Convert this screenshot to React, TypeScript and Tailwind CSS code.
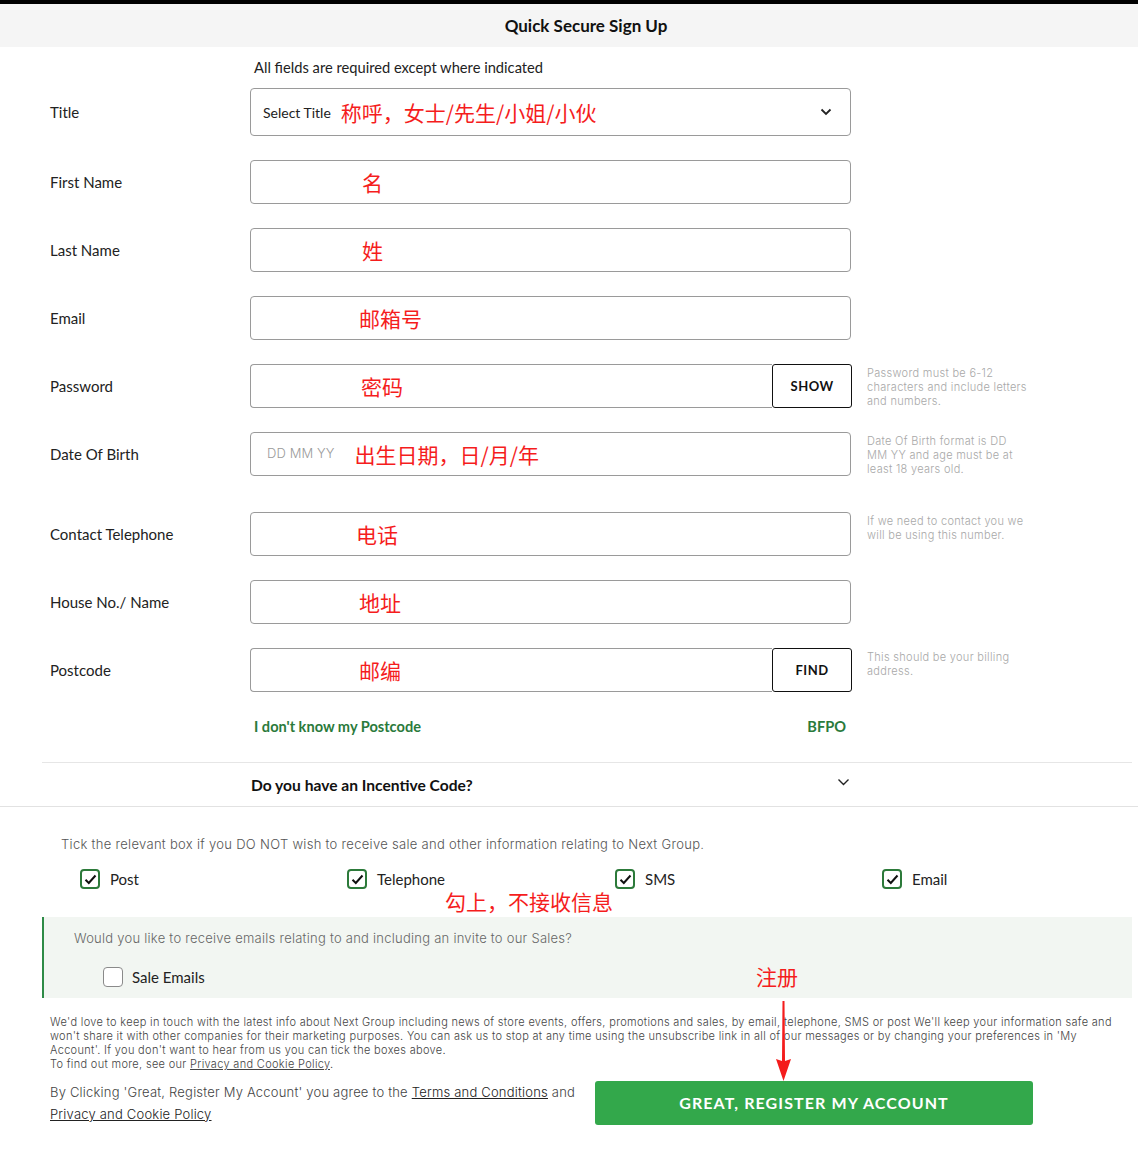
import React from "react";

const LATO = "font-['Lato','Noto_Sans_CJK_SC',sans-serif]";
const RED = "text-[#f51d1d] text-[21px] leading-[24px] font-['Noto_Sans_CJK_SC',sans-serif]";
const HELP = "font-['Inter',sans-serif] font-light text-[11px] leading-[14px] text-[#a8a8a8] tracking-[0.3px]";

function Row({
  label,
  h = 44,
  help,
  children,
  mt,
}: {
  label: string;
  h?: number;
  help?: React.ReactNode;
  children: React.ReactNode;
  mt: string;
}) {
  return (
    <div className={`flex items-start ${mt}`}>
      <div
        className={`w-[250px] pl-[50px] flex items-center text-[15px] text-[#222] ${h === 48 ? "h-[48px]" : "h-[44px]"}`}
      >
        {label}
      </div>
      <div className="w-[602px]">{children}</div>
      {help && <div className={`ml-[15px] w-[161px] pt-[2px] ${HELP}`}>{help}</div>}
    </div>
  );
}

function Input({ red, pl = "pl-[111px]" }: { red: string; pl?: string }) {
  return (
    <div className={`h-[44px] w-[601px] border border-[#9a9a9a] rounded-[4px] flex items-center ${pl}`}>
      <span className={RED}>{red}</span>
    </div>
  );
}

function Check({ checked }: { checked: boolean }) {
  return checked ? (
    <div className="w-[20px] h-[20px] rounded-[4px] border-2 border-[#2c7a3a] flex items-center justify-center bg-white">
      <svg width="13" height="11" viewBox="0 0 13 11">
        <path d="M1.5 5.8 L4.8 9 L11.5 1.5" fill="none" stroke="#111" strokeWidth="2" />
      </svg>
    </div>
  ) : (
    <div className="w-[20px] h-[20px] rounded-[4px] border border-[#8a8a8a] bg-white" />
  );
}

export default function App() {
  return (
    <div className={`relative w-[1138px] min-h-[1158px] bg-white ${LATO} text-[#222]`}>
      <div className="h-[4px] bg-black" />
      <div className="h-[43px] bg-[#f5f5f5] flex items-center justify-center pl-[34px] text-[17px] font-bold text-[#111]">
        Quick Secure Sign Up
      </div>

      <div className="mt-[10px] pl-[254px] text-[14.7px] leading-[20px] text-[#222]">
        All fields are required except where indicated
      </div>

      <Row label="Title" h={48} mt="mt-[11px]">
        <div className="h-[48px] w-[601px] border border-[#9a9a9a] rounded-[4px] flex items-center pl-[12px] pr-[18px]">
          <span className="text-[14px] text-[#222]">Select Title</span>
          <span className={`ml-[10px] ${RED}`}>称呼，女士/先生/小姐/小伙</span>
          <svg className="ml-auto" width="12" height="8" viewBox="0 0 12 8">
            <path d="M1.5 1.5 L6 6 L10.5 1.5" fill="none" stroke="#222" strokeWidth="1.8" />
          </svg>
        </div>
      </Row>

      <Row label="First Name" mt="mt-[24px]">
        <Input red="名" />
      </Row>
      <Row label="Last Name" mt="mt-[24px]">
        <Input red="姓" />
      </Row>
      <Row label="Email" mt="mt-[24px]">
        <Input red="邮箱号" pl="pl-[108px]" />
      </Row>
      <Row
        label="Password"
        mt="mt-[24px]"
        help={<>Password must be 6-12 characters and include letters and numbers.</>}
      >
        <div className="flex h-[44px]">
          <div className="w-[523px] h-[44px] border border-r-0 border-[#9a9a9a] rounded-l-[4px] flex items-center pl-[110px]">
            <span className={RED}>密码</span>
          </div>
          <div className="w-[80px] h-[44px] pt-[2px] border border-[#111] rounded-[3px] flex items-center justify-center text-[13px] font-bold tracking-[0.5px] text-[#111]">
            SHOW
          </div>
        </div>
      </Row>
      <Row
        label="Date Of Birth"
        mt="mt-[24px]"
        help={<>Date Of Birth format is DD MM YY and age must be at least 18 years old.</>}
      >
        <div className="h-[44px] w-[601px] border border-[#9a9a9a] rounded-[4px] flex items-center pl-[16px]">
          <span className="font-['Inter',sans-serif] font-light text-[13px] text-[#9a9a9a] tracking-[0.1px]">DD MM YY</span>
          <span className={`ml-[20px] ${RED}`}>出生日期，日/月/年</span>
        </div>
      </Row>
      <Row
        label="Contact Telephone"
        mt="mt-[36px]"
        help={<>If we need to contact you we will be using this number.</>}
      >
        <Input red="电话" pl="pl-[105px]" />
      </Row>
      <Row label="House No./ Name" mt="mt-[24px]">
        <Input red="地址" pl="pl-[108px]" />
      </Row>
      <Row label="Postcode" mt="mt-[24px]" help={<>This should be your billing address.</>}>
        <div className="flex h-[44px]">
          <div className="w-[522px] h-[44px] border border-r-0 border-[#9a9a9a] rounded-l-[4px] flex items-center pl-[108px]">
            <span className={RED}>邮编</span>
          </div>
          <div className="w-[80px] h-[44px] pt-[2px] border border-[#111] rounded-[3px] flex items-center justify-center text-[13px] font-bold tracking-[0.5px] text-[#111]">
            FIND
          </div>
        </div>
      </Row>

      <div className="mt-[25px] flex w-[846px] pl-[254px] justify-between text-[14.6px] leading-[20px] font-bold text-[#2a7a3b]">
        <span>I don't know my Postcode</span>
        <span>BFPO</span>
      </div>

      <div className="mt-[25px] ml-[42px] mr-[6px] border-t border-[#e6e6e6]">
        <div className="h-[43px] flex items-center pl-[209px] w-[808px] justify-between">
          <span className="text-[15.6px] font-bold text-[#111] pt-[2px]">Do you have an Incentive Code?</span>
          <svg width="13" height="8" viewBox="0 0 13 8" className="mb-[5px]">
            <path d="M1.5 1.5 L6.5 6.5 L11.5 1.5" fill="none" stroke="#222" strokeWidth="1.4" />
          </svg>
        </div>
      </div>
      <div className="border-t border-[#e2e2e2]" />

      <div className="mt-[27px] pl-[61px] text-[13px] leading-[20px] text-[#555] font-['Inter',sans-serif] font-light tracking-[0.3px]">
        Tick the relevant box if you DO NOT wish to receive sale and other information relating to Next Group.
      </div>

      <div className="mt-[14px] ml-[80px] grid grid-cols-[267px_268px_267px_267px] h-[20px]">
        {["Post", "Telephone", "SMS", "Email"].map((t) => (
          <div key={t} className="flex items-center gap-[10px]">
            <Check checked />
            <span className="text-[15px] text-[#222]">{t}</span>
          </div>
        ))}
      </div>

      <div className={`pt-[1px] pl-[445px] ${RED}`}>勾上，不接收信息</div>

      <div className="relative mt-[4px] ml-[42px] mr-[6px] h-[81px] bg-[#f2f6f2] border-l-2 border-[#2e8b47]">
        <div className="pt-[11px] pl-[30px] text-[13px] leading-[20px] text-[#666] font-['Inter',sans-serif] font-light tracking-[0.25px]">
          Would you like to receive emails relating to and including an invite to our Sales?
        </div>
        <div className="mt-[19px] pl-[59px] flex items-center gap-[9px] h-[20px]">
          <Check checked={false} />
          <span className="text-[15px] text-[#222]">Sale Emails</span>
        </div>
        <div className={`absolute left-[712px] top-[47px] ${RED}`}>注册</div>
      </div>

      <div className="mt-[17px] pl-[50px] w-[1118px] font-['Inter',sans-serif] font-light text-[11px] leading-[14px] text-[#444] tracking-[0.32px]">
        We'd love to keep in touch with the latest info about Next Group including news of store events, offers,
        promotions and sales, by email, telephone, SMS or post We'll keep your information safe and won't share it
        with other companies for their marketing purposes. You can ask us to stop at any time using the unsubscribe
        link in all of our messages or by changing your preferences in 'My Account'. If you don't want to hear from us
        you can tick the boxes above.
        <br />
        To find out more, see our <span className="underline">Privacy and Cookie Policy</span>.
      </div>

      <div className="mt-[10px] flex items-start pb-[33px]">
        <div className="pl-[50px] w-[592px] font-['Inter',sans-serif] font-light text-[13px] leading-[22px] text-[#444] tracking-[0.2px]">
          By Clicking 'Great, Register My Account' you agree to the{" "}
          <span className="underline text-[#222]">Terms and Conditions</span> and{" "}
          <span className="underline text-[#222]">Privacy and Cookie Policy</span>
        </div>
        <div className="ml-[3px] w-[438px] h-[44px] rounded-[3px] bg-[#33a84b] flex items-center justify-center text-white text-[16px] font-bold tracking-[1.1px]">
          GREAT, REGISTER MY ACCOUNT
        </div>
      </div>

      <svg className="absolute left-[775px] top-[1001px]" width="17" height="80" viewBox="0 0 17 80">
        <polygon points="7.5,0 9.5,0 10,60 16,58 8.5,80 1,58 7,60" fill="#f41c1c" />
      </svg>
    </div>
  );
}
